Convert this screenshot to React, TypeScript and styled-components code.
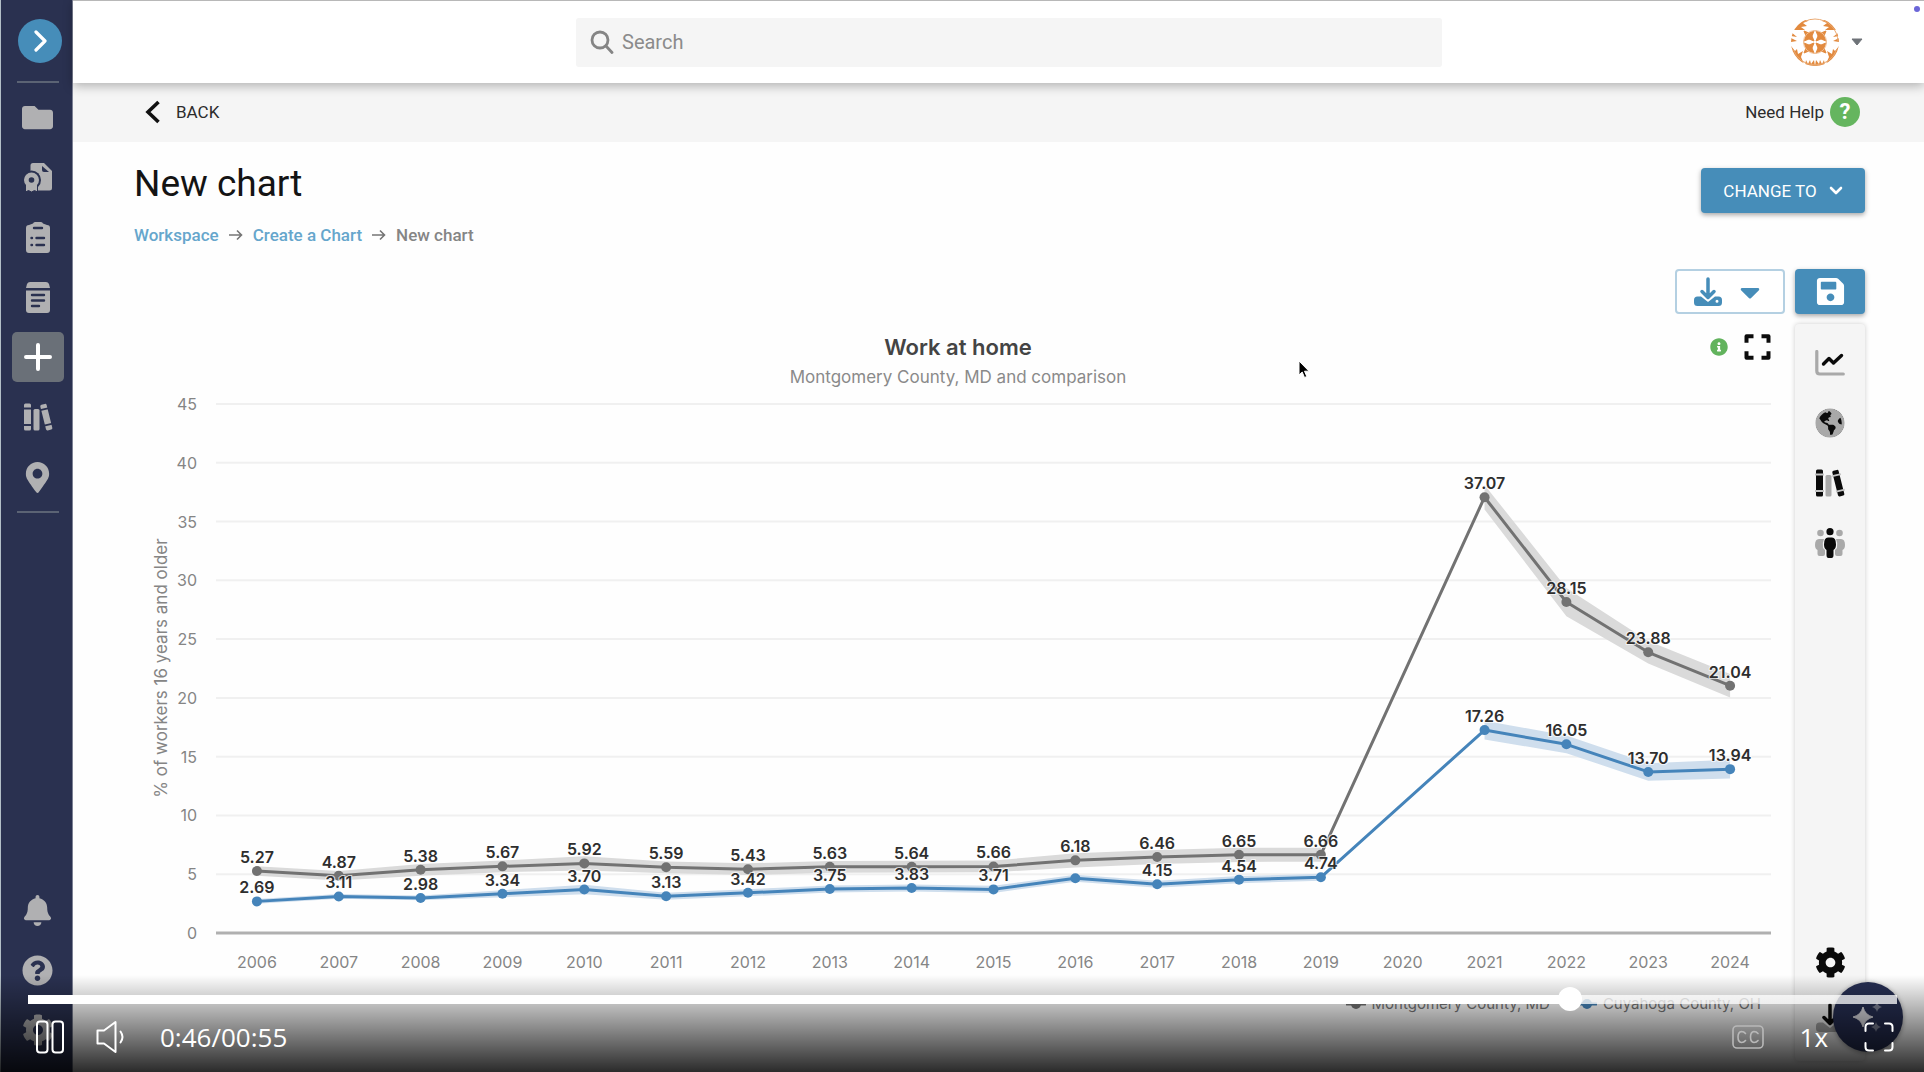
import React, { useState } from "react";
import styled, { createGlobalStyle } from "styled-components";
import {
  FaFolder,
  FaBell,
  FaCog,
  FaSave,
  FaGlobeAmericas,
  FaMapMarkerAlt,
  FaQuestionCircle,
  FaCaretDown,
  FaInfoCircle,
} from "react-icons/fa";

const GlobalStyle = createGlobalStyle`
  *, *::before, *::after { box-sizing: border-box; }
  body { margin: 0; background: #ffffff; font-family: Roboto, "Liberation Sans", sans-serif; }
  button { font: inherit; color: inherit; border: 0; padding: 0; background: none; cursor: pointer; }
  a { text-decoration: none; color: inherit; }
  svg { display: block; flex: none; }
`;

const NAVY = "#2a3150";
const BLUE = "#468db9";
const PALE = "#b0b0b2";

/* ---------- layout ---------- */

const Player = styled.div`
  position: relative;
  display: flex;
  min-height: 100vh;
  overflow: hidden;
  background: #fefefe;
`;

const Sidebar = styled.aside`
  width: 73px;
  flex: none;
  display: flex;
  flex-direction: column;
  align-items: center;
  padding: 19px 0 17px 2px;
  background: ${NAVY};
  color: ${PALE};
  border-left: 1px solid #b3bfc7;
  border-right: 1px solid #7d8295;
`;

const Toggle = styled.button`
  width: 44px;
  height: 44px;
  margin-left: 4px;
  border-radius: 50%;
  background: ${BLUE};
  display: grid;
  place-items: center;
`;

const Divider = styled.hr<{ $above: number }>`
  width: 42px;
  height: 2px;
  border: 0;
  margin: ${(p) => p.$above}px 0 9px;
  background: #5b6374;
`;

const NavList = styled.nav`
  display: flex;
  flex-direction: column;
  gap: 10px;
`;

const NavFooter = styled(NavList)`
  margin-top: auto;
`;

const NavItem = styled.a<{ $active?: boolean }>`
  width: 52px;
  height: 50px;
  border-radius: 5px;
  display: grid;
  place-items: center;
  background: ${(p) => (p.$active ? "#6a7078" : "transparent")};
`;

const Main = styled.main`
  flex: 1;
  min-width: 0;
  display: flex;
  flex-direction: column;
`;

const Header = styled.header`
  position: relative;
  height: 83px;
  display: grid;
  grid-template-columns: 503px minmax(200px, 1fr) 482px;
  align-items: center;
  background: #ffffff;
  border-top: 1px solid #b8b8b8;
  box-shadow: 0 3px 10px rgba(0, 0, 0, 0.28);
`;

const SearchBox = styled.label`
  height: 49px;
  display: flex;
  align-items: center;
  gap: 6px;
  padding-left: 14px;
  background: #f5f5f5;
  border-radius: 3px;
`;

const SearchInput = styled.input`
  flex: 1;
  border: 0;
  outline: 0;
  background: transparent;
  font: 20px Roboto, "Liberation Sans", sans-serif;
  color: #333333;
  &::placeholder {
    color: #8b8b8b;
    opacity: 1;
  }
`;

const AccountButton = styled.button`
  justify-self: end;
  margin-right: 61px;
  display: flex;
  align-items: center;
  gap: 12px;
  color: #6e7378;
`;

const RecordingDot = styled.span`
  position: absolute;
  top: 5px;
  right: 4px;
  width: 6px;
  height: 6px;
  border-radius: 50%;
  background: #6b66d8;
`;

const SubBar = styled.div`
  height: 59px;
  display: flex;
  align-items: center;
  justify-content: space-between;
  padding: 0 64px 2px 72px;
  background: #f5f5f5;
  font-size: 17px;
  color: #2c2c2c;
`;

const BackLink = styled.a`
  display: flex;
  align-items: center;
  gap: 16px;
`;

const HelpLink = styled.a`
  display: flex;
  align-items: center;
  gap: 6px;
`;

const HelpBadge = styled.span`
  width: 30px;
  height: 30px;
  border-radius: 50%;
  background: #65b55f;
  color: #ffffff;
  display: grid;
  place-items: center;
  font-size: 22px;
  font-weight: 700;
`;

const Content = styled.section`
  flex: 1;
  display: flex;
  flex-direction: column;
  gap: 10px;
  padding: 21px 59px 11px 61px;
`;

const Heading = styled.div`
  display: flex;
  justify-content: space-between;
  align-items: flex-start;
`;

const Title = styled.h1`
  margin: 0 0 20px;
  font-size: 37px;
  line-height: 42px;
  font-weight: 400;
  color: #141414;
`;

const Crumbs = styled.nav`
  display: flex;
  align-items: center;
  gap: 10px;
  font-size: 17px;
  line-height: 20px;
  font-weight: 500;
  color: #858585;
  a {
    color: #66a6cc;
  }
`;

const Actions = styled.div`
  padding-top: 5px;
  display: flex;
  flex-direction: column;
  align-items: flex-end;
  gap: 56px;
`;

const ToolRow = styled.div`
  display: flex;
  gap: 10px;
`;

const ActionButton = styled.button<{ $width: number; $outlined?: boolean }>`
  width: ${(p) => p.$width}px;
  height: 45px;
  display: flex;
  align-items: center;
  justify-content: center;
  gap: 12px;
  border-radius: 4px;
  font-size: 17px;
  background: ${(p) => (p.$outlined ? "#ffffff" : BLUE)};
  color: ${(p) => (p.$outlined ? BLUE : "#ffffff")};
  border: ${(p) => (p.$outlined ? "2px solid #b4d0e2" : "0")};
  box-shadow: ${(p) => (p.$outlined ? "none" : "0 2px 5px rgba(0, 0, 0, 0.35)")};
`;

const Workspace = styled.div`
  flex: 1;
  display: flex;
  gap: 10px;
`;

const ToolPanel = styled.aside`
  width: 70px;
  flex: none;
  display: flex;
  flex-direction: column;
  padding: 9px 0 15px;
  background: #f5f5f5;
  border-radius: 4px;
  box-shadow: 0 0 5px rgba(0, 0, 0, 0.2);
  color: #0a0a0a;
`;

const PanelButton = styled.button<{ $height: number; $pushDown?: boolean }>`
  height: ${(p) => p.$height}px;
  margin-top: ${(p) => (p.$pushDown ? "auto" : "0")};
  display: grid;
  place-items: center;
`;

const ChartFigure = styled.figure`
  flex: 1;
  min-width: 0;
  margin: 0;
  display: flex;
  flex-direction: column;
  font-family: Inter, "Liberation Sans", sans-serif;
`;

const ChartHeader = styled.figcaption`
  display: grid;
  grid-template-columns: 1fr auto 1fr;
  align-items: center;
  padding: 9px 14px 0 11px;
`;

const ChartTitle = styled.h2`
  grid-column: 2;
  margin: 0;
  font-size: 22px;
  line-height: 28px;
  font-weight: 600;
  text-align: center;
  color: #444444;
`;

const ChartSubtitle = styled.p`
  grid-column: 2;
  margin: 0;
  padding-top: 4px;
  font-size: 17px;
  line-height: 24px;
  text-align: center;
  color: #8a8a8a;
`;

const ChartTools = styled.div`
  justify-self: end;
  display: flex;
  align-items: center;
  gap: 16px;
  color: #62b35d;
`;

const Plot = styled.svg`
  width: 100%;
  height: auto;
  margin-top: -3px;
  font-family: Inter, "Liberation Sans", sans-serif;
`;

const AxisText = styled.text<{ $large?: boolean }>`
  font-size: ${(p) => (p.$large ? 17 : 16)}px;
  fill: #858585;
`;

const ValueText = styled.text`
  font-size: 16px;
  font-weight: 600;
  fill: #2e2e2e;
  stroke: #ffffff;
  stroke-width: 2px;
  stroke-opacity: 0.7;
  paint-order: stroke;
  text-anchor: middle;
`;

const Legend = styled.ul`
  list-style: none;
  margin: 8px 24px 0 0;
  padding: 0;
  display: flex;
  justify-content: flex-end;
  gap: 27px;
  font-size: 15px;
  line-height: 20px;
  color: #777777;
`;

const LegendItem = styled.li`
  display: flex;
  align-items: center;
  gap: 6px;
`;

const AssistantButton = styled.button`
  position: absolute;
  right: 21px;
  bottom: 20px;
  width: 70px;
  height: 70px;
  border-radius: 50%;
  background: #262e52;
  display: grid;
  place-items: center;
  box-shadow: 0 1px 5px rgba(0, 0, 0, 0.4);
`;

const Pointer = styled.svg`
  position: absolute;
  left: 1298px;
  top: 360px;
`;

/* ---------- video controls ---------- */

const Controls = styled.div`
  position: absolute;
  left: 0;
  right: 0;
  bottom: 0;
  height: 97px;
  padding: 12px 27px 0 28px;
  background: linear-gradient(rgba(0, 0, 0, 0), rgba(0, 0, 0, 0.83));
  color: #ffffff;
`;

const Progress = styled.input<{ $played: number }>`
  appearance: none;
  display: block;
  width: 100%;
  height: 24px;
  margin: 0;
  background: transparent;
  &::-webkit-slider-runnable-track {
    height: 9px;
    background: linear-gradient(
      to right,
      #ffffff ${(p) => p.$played}%,
      rgba(255, 255, 255, 0.75) ${(p) => p.$played}%
    );
  }
  &::-webkit-slider-thumb {
    appearance: none;
    width: 24px;
    height: 24px;
    margin-top: -8px;
    border-radius: 50%;
    background: #ffffff;
  }
`;

const ControlRow = styled.div`
  height: 52px;
  display: flex;
  align-items: center;
  gap: 32px;
  padding: 0 3px 0 8px;
  font-family: "Open Sans", "Noto Sans", sans-serif;
  font-size: 26px;
`;

const ControlGroup = styled.div`
  margin-left: auto;
  display: flex;
  align-items: center;
  gap: 36px;
`;

/* ---------- icons ---------- */

const CertificateIcon = () => (
  <svg width="30" height="30" viewBox="0 0 30 30">
    <path d="M10 1h11l8 8v17a2.500 2.500 0 0 1-2.500 2.500H10a2.500 2.500 0 0 1-2.500-2.500V3.500A2.500 2.500 0 0 1 10 1z" fill={PALE} />
    <path d="M19 4l7 6h-5a2 2 0 0 1-2-2z" fill={NAVY} />
    <circle cx="8.500" cy="18" r="9.500" fill={NAVY} />
    <path d="M2.500 22h12v8l-3-1.500-3 1.500-3-1.500-3 1.500z" fill={PALE} stroke={NAVY} strokeWidth="1" />
    <circle cx="8.500" cy="18" r="7.500" fill={PALE} />
    <circle cx="8.500" cy="18" r="2.800" fill={NAVY} />
  </svg>
);

const ClipboardIcon = () => (
  <svg width="24" height="31" viewBox="0 0 24 31">
    <path d="M7 1.500Q7.500 0 9 0h6q1.500 0 2 1.500l4 1.500a3 3 0 0 1 3 3v22a3 3 0 0 1-3 3H3a3 3 0 0 1-3-3V6a3 3 0 0 1 3-3z" fill={PALE} />
    <g stroke={NAVY} strokeWidth="2.400" strokeLinecap="round">
      <path d="M8 6h8M10.500 16h7.500M10.500 23h7.500M5.500 16h.5M5.500 23h.5" />
    </g>
  </svg>
);

const NoteIcon = () => (
  <svg width="24" height="31" viewBox="0 0 24 31">
    <path d="M4 0h16q2 0 3 2l1 4H0l1-4q1-2 3-2z" fill={PALE} />
    <path d="M0 8.500h24V28a3 3 0 0 1-3 3H3a3 3 0 0 1-3-3z" fill={PALE} />
    <path d="M6 13h12M6 18.500h12M6 24h7" stroke={NAVY} strokeWidth="2.400" strokeLinecap="round" />
  </svg>
);

const BooksIcon = ({ tone, middle, gap }: { tone: string; middle: string; gap: string }) => (
  <svg width="30" height="28" viewBox="0 0 30 28">
    <rect x="1" y="0.500" width="7" height="27" rx="1.500" fill={tone} />
    <path d="M0 5.500h9M0 22h9" stroke={gap} strokeWidth="1.800" />
    <rect x="10.500" y="6" width="6" height="21.500" rx="1.500" fill={middle} />
    <g transform="rotate(-14 23 14)">
      <rect x="20" y="1" width="6.500" height="26.500" rx="1.500" fill={tone} />
      <path d="M19 6h9M19 22h9" stroke={gap} strokeWidth="1.800" />
    </g>
  </svg>
);

const DownloadIcon = ({ arrow, tray }: { arrow: string; tray: string }) => (
  <svg width="28" height="30" viewBox="0 0 28 30">
    <path d="M3.500 19.500H7l7 5.500 7-5.500h3.500A3.500 3.500 0 0 1 28 23v2.500A3.500 3.500 0 0 1 24.500 29h-21A3.500 3.500 0 0 1 0 25.500V23a3.500 3.500 0 0 1 3.500-3.500zM23 22.800a1.500 1.500 0 1 0 0 3 1.500 1.500 0 0 0 0-3z" fill={tray} fillRule="evenodd" />
    <path d="M14 2v18M8 14.500l6 6 6-6" fill="none" stroke={arrow} strokeWidth="3.500" strokeLinecap="round" strokeLinejoin="round" />
  </svg>
);

const ChartLineIcon = () => (
  <svg width="30" height="26" viewBox="0 0 30 26">
    <path d="M1.800 1.500V21q0 3 3 3h23.500" fill="none" stroke="#a9a9a9" strokeWidth="3.200" strokeLinecap="round" />
    <path d="M8.500 14l5.500-5.500 4.500 4.500 8-7.500" fill="none" stroke="#0a0a0a" strokeWidth="3.400" strokeLinecap="round" strokeLinejoin="round" />
  </svg>
);

const GlobeStack = styled.span`
  display: grid;
  place-items: center;
  width: 30px;
  height: 30px;
  border-radius: 50%;
  background: radial-gradient(circle, #0a0a0a 66%, transparent 68%);
  color: #a9a9a9;
`;

const PeopleIcon = () => (
  <svg width="30" height="30" viewBox="0 0 30 30">
    <g fill="#a9a9a9">
      <circle cx="5.500" cy="5" r="3.300" />
      <circle cx="24.500" cy="5" r="3.300" />
      <path d="M4 11h5q-2 4-1 9l2 2v4q0 2-2 2H4.500q-2 0-2-2v-4Q0 21 0 17q0-6 4-6zM26 11h-5q2 4 1 9l-2 2v4q0 2 2 2h3.500q2 0 2-2v-4q2.500-1 2.500-5 0-6-4-6z" />
    </g>
    <g fill="#0a0a0a">
      <circle cx="15" cy="3.700" r="3.600" />
      <path d="M13 9.500h4q4 0 4 7 0 4-2.500 5.500V27q0 3-2 3h-3q-2 0-2-3v-5Q9 20.500 9 16.500q0-7 4-7z" />
    </g>
  </svg>
);

const ExpandIcon = () => (
  <svg width="27" height="26" viewBox="0 0 27 26" fill="none" stroke="#0c0c0c" strokeWidth="4" strokeLinejoin="round">
    <path d="M9.500 2.300h-7v6.500M17.500 2.300h7v6.500M9.500 23.700h-7v-6.500M17.500 23.700h7v-6.500" />
  </svg>
);

const Avatar = () => (
  <svg width="48" height="48" viewBox="-24 -24 48 48">
    <defs>
      <clipPath id="avatar-clip">
        <circle r="24" />
      </clipPath>
    </defs>
    <g clipPath="url(#avatar-clip)" fill="#e28a3f">
      {[1, -1].map((s) => (
        <g key={s} transform={`scale(${s} 1)`}>
          <path d="M1 -11L6 -9L11 -11L9 -6L11 -1L6 -3L1 -1L3 -6zM1 11L6 9L11 11L9 6L11 1L6 3L1 1L3 6z" stroke="#e28a3f" strokeWidth="1" />
          <path d="M7 -21L15 -24L24 -12L10 -12L14 -15L8 -16L12 -19z" />
          <path d="M24 -10L18 -5L24 -6zM24 -4L18 -1L24 0z" />
          <path d="M24 4L20 9L18 7L17 12L12 9L14 15L11 22L24 20z" />
          <path d="M10 24L9 18L7 22L5 18L4 22L1 18L0 24z" />
        </g>
      ))}
      <circle r="23" fill="none" stroke="#e9a76e" strokeWidth="1" strokeDasharray="56 33" strokeDashoffset="-8" />
      <circle r="11.500" fill="none" stroke="#efbd92" strokeWidth="1" />
    </g>
  </svg>
);

const SparklesIcon = () => (
  <svg width="34" height="34" viewBox="0 0 34 34">
    <path d="M12 7q2 8 10 10-8 2-10 10-2-8-10-10 8-2 10-10z" fill="#dcdce2" stroke="#dcdce2" strokeLinejoin="round" />
    <path d="M26 2q1 4 5 5-4 1-5 5-1-4-5-5 4-1 5-5zM25 22q1 4 5 5-4 1-5 5-1-4-5-5 4-1 5-5z" fill="#7d8296" />
  </svg>
);

const Arrow = () => (
  <svg width="14" height="12" viewBox="0 0 14 12" fill="none" stroke="#757575" strokeWidth="1.600">
    <path d="M0 6h12.500M8 1.500l4.500 4.500L8 10.500" />
  </svg>
);

/* ---------- chart ---------- */

type Point = { year: number; value: number | null; spread: number; label?: string };

const toPoints = (values: (number | null)[], spreads: number[], unlabeled: number[] = []): Point[] =>
  values.map((value, i) => ({
    year: 2006 + i,
    value,
    spread: spreads[i],
    label: value === null || unlabeled.includes(2006 + i) ? undefined : value.toFixed(2),
  }));

const series = [
  {
    name: "Montgomery County, MD",
    color: "#727272",
    band: "#dadada",
    points: toPoints(
      [5.27, 4.87, 5.38, 5.67, 5.92, 5.59, 5.43, 5.63, 5.64, 5.66, 6.18, 6.46, 6.65, 6.66, null, 37.07, 28.15, 23.88, 21.04],
      [0.4, 0.4, 0.5, 0.5, 0.6, 0.5, 0.5, 0.5, 0.5, 0.5, 0.6, 0.6, 0.6, 0.6, 0, 1.05, 1.2, 0.95, 1]
    ),
  },
  {
    name: "Cuyahoga County, OH",
    color: "#4584ba",
    band: "#cfdeed",
    points: toPoints(
      [2.69, 3.11, 2.98, 3.34, 3.7, 3.13, 3.42, 3.75, 3.83, 3.71, 4.66, 4.15, 4.54, 4.74, null, 17.26, 16.05, 13.7, 13.94],
      [0.2, 0.2, 0.2, 0.3, 0.4, 0.3, 0.3, 0.3, 0.3, 0.3, 0.3, 0.3, 0.3, 0.3, 0, 0.8, 0.75, 0.75, 0.8],
      [2016]
    ),
  },
];

const LEFT = 82;
const RIGHT = 1637;
const TOP = 18;
const BASE = 547;
const STEP = (RIGHT - LEFT) / 19;
const xOf = (year: number) => LEFT + (year - 2006 + 0.5) * STEP;
const yOf = (value: number) => BASE - (value * (BASE - TOP)) / 45;

const bandPath = (points: Point[]) => {
  const upper = points.map((p) => `${xOf(p.year)},${yOf(p.value! + p.spread)}`);
  const lower = [...points].reverse().map((p) => `${xOf(p.year)},${yOf(p.value! - p.spread)}`);
  return `M${[...upper, ...lower].join("L")}Z`;
};

const Chart = () => (
  <Plot viewBox="0 0 1651 600" role="img" aria-label="Work at home, percent by year">
    {[0, 5, 10, 15, 20, 25, 30, 35, 40, 45].map((tick) => (
      <g key={tick}>
        <line
          x1={LEFT}
          x2={RIGHT}
          y1={yOf(tick)}
          y2={yOf(tick)}
          stroke={tick ? "#f0f0f0" : "#b0b0b0"}
          strokeWidth={tick ? 2 : 3}
        />
        <AxisText x={LEFT - 19} y={yOf(tick) + 6} textAnchor="end">
          {tick}
        </AxisText>
      </g>
    ))}
    {series[0].points.map((p) => (
      <AxisText key={p.year} x={xOf(p.year)} y={BASE + 35} textAnchor="middle">
        {p.year}
      </AxisText>
    ))}
    <AxisText $large transform="translate(33 282) rotate(-90)" textAnchor="middle">
      % of workers 16 years and older
    </AxisText>
    {series.map((s) => (
      <g key={s.name} fill={s.band}>
        <path d={bandPath(s.points.slice(0, 14))} />
        <path d={bandPath(s.points.slice(15))} />
      </g>
    ))}
    {series.map((s) => {
      const drawn = s.points.filter((p) => p.value !== null);
      return (
        <g key={s.name}>
          <polyline
            points={drawn.map((p) => `${xOf(p.year)},${yOf(p.value!)}`).join(" ")}
            fill="none"
            stroke={s.color}
            strokeWidth="3"
            strokeLinejoin="round"
          />
          {drawn.map((p) => (
            <circle key={p.year} cx={xOf(p.year)} cy={yOf(p.value!)} r="5" fill={s.color} />
          ))}
        </g>
      );
    })}
    {series.map((s) =>
      s.points
        .filter((p) => p.label)
        .map((p) => (
          <ValueText key={s.name + p.year} x={xOf(p.year)} y={yOf(p.value!) - 8}>
            {p.label}
          </ValueText>
        ))
    )}
  </Plot>
);

/* ---------- page ---------- */

export default function App() {
  const [time, setTime] = useState(45.6);

  return (
    <Player>
      <GlobalStyle />
      <Sidebar>
        <Toggle aria-label="Expand menu">
          <svg width="14" height="22" viewBox="0 0 14 22" fill="none" stroke="#ffffff" strokeWidth="3.200" strokeLinecap="round" strokeLinejoin="round">
            <path d="M3 2l9 9-9 9" />
          </svg>
        </Toggle>
        <Divider $above={18} />
        <NavList aria-label="Main">
          <NavItem href="#files" aria-label="Files"><FaFolder size={31} /></NavItem>
          <NavItem href="#certificates" aria-label="Certificates"><CertificateIcon /></NavItem>
          <NavItem href="#surveys" aria-label="Surveys"><ClipboardIcon /></NavItem>
          <NavItem href="#notes" aria-label="Notes"><NoteIcon /></NavItem>
          <NavItem href="#create" aria-label="Create" $active>
            <svg width="28" height="28" viewBox="0 0 28 28" stroke="#ffffff" strokeWidth="4" strokeLinecap="round">
              <path d="M14 2v24M2 14h24" />
            </svg>
          </NavItem>
          <NavItem href="#library" aria-label="Library">
            <BooksIcon tone={PALE} middle={PALE} gap={NAVY} />
          </NavItem>
          <NavItem href="#places" aria-label="Places"><FaMapMarkerAlt size={31} /></NavItem>
        </NavList>
        <Divider $above={9} />
        <NavFooter aria-label="Support">
          <NavItem href="#alerts" aria-label="Alerts"><FaBell size={31} /></NavItem>
          <NavItem href="#help" aria-label="Help"><FaQuestionCircle size={31} /></NavItem>
          <NavItem href="#settings" aria-label="Settings"><FaCog size={32} /></NavItem>
        </NavFooter>
      </Sidebar>

      <Main>
        <Header>
          <span />
          <SearchBox>
            <svg width="24" height="24" viewBox="0 0 24 24" fill="none" stroke="#858585" strokeWidth="2.800" strokeLinecap="round">
              <circle cx="10" cy="10" r="8" />
              <path d="M16 16l6 6.500" />
            </svg>
            <SearchInput placeholder="Search" aria-label="Search" />
          </SearchBox>
          <AccountButton aria-label="Account">
            <Avatar />
            <svg width="12" height="8" viewBox="0 0 12 8" fill="currentColor"><path d="M1 1h10L6 7z" stroke="currentColor" strokeLinejoin="round" /></svg>
          </AccountButton>
          <RecordingDot />
        </Header>

        <SubBar>
          <BackLink href="#back">
            <svg width="15" height="24" viewBox="0 0 15 24" fill="none" stroke="#111111" strokeWidth="3.600">
              <path d="M13.500 2L3 12l10.500 10" />
            </svg>
            BACK
          </BackLink>
          <HelpLink href="#need-help">
            Need Help
            <HelpBadge>?</HelpBadge>
          </HelpLink>
        </SubBar>

        <Content>
          <Heading>
            <div>
              <Title>New chart</Title>
              <Crumbs aria-label="Breadcrumb">
                <a href="#workspace">Workspace</a>
                <Arrow />
                <a href="#create-chart">Create a Chart</a>
                <Arrow />
                <span>New chart</span>
              </Crumbs>
            </div>
            <Actions>
              <ActionButton $width={164}>
                CHANGE TO
                <svg width="14" height="9" viewBox="0 0 14 9" fill="none" stroke="#ffffff" strokeWidth="2.600" strokeLinecap="round" strokeLinejoin="round">
                  <path d="M2 2l5 5 5-5" />
                </svg>
              </ActionButton>
              <ToolRow>
                <ActionButton $width={110} $outlined aria-label="Download">
                  <DownloadIcon arrow={BLUE} tray={BLUE} />
                  <FaCaretDown size={32} />
                </ActionButton>
                <ActionButton $width={70} aria-label="Save">
                  <FaSave size={31} />
                </ActionButton>
              </ToolRow>
            </Actions>
          </Heading>

          <Workspace>
            <ChartFigure>
              <ChartHeader>
                <ChartTitle>Work at home</ChartTitle>
                <ChartTools>
                  <FaInfoCircle size={18} />
                  <button aria-label="Full screen chart"><ExpandIcon /></button>
                </ChartTools>
                <ChartSubtitle>Montgomery County, MD and comparison</ChartSubtitle>
              </ChartHeader>
              <Chart />
              <Legend>
                {series.map((s) => (
                  <LegendItem key={s.name}>
                    <svg width="20" height="12" viewBox="0 0 20 12">
                      <path d="M1 6h18" stroke={s.color} strokeWidth="3" strokeLinecap="round" />
                      <circle cx="10" cy="6" r="5" fill={s.color} />
                    </svg>
                    {s.name}
                  </LegendItem>
                ))}
              </Legend>
            </ChartFigure>

            <ToolPanel>
              <PanelButton $height={60} aria-label="Indicators"><ChartLineIcon /></PanelButton>
              <PanelButton $height={60} aria-label="Locations">
                <GlobeStack><FaGlobeAmericas size={30} /></GlobeStack>
              </PanelButton>
              <PanelButton $height={60} aria-label="Sources">
                <BooksIcon tone="#0a0a0a" middle="#a9a9a9" gap="#c4c4c4" />
              </PanelButton>
              <PanelButton $height={60} aria-label="Populations"><PeopleIcon /></PanelButton>
              <PanelButton $height={56} $pushDown aria-label="Chart settings"><FaCog size={31} /></PanelButton>
              <PanelButton $height={56} aria-label="Export">
                <DownloadIcon arrow="#0a0a0a" tray="#a9a9a9" />
              </PanelButton>
            </ToolPanel>
          </Workspace>
        </Content>
      </Main>

      <AssistantButton aria-label="Assistant"><SparklesIcon /></AssistantButton>

      <Pointer width="14" height="20" viewBox="0 0 14 20" aria-hidden="true">
        <path d="M1 1v14l3.200-3 2.300 5.500 2.300-1-2.300-5.300H11z" fill="#000000" stroke="#ffffff" strokeWidth="1" />
      </Pointer>

      <Controls>
        <Progress
          type="range"
          aria-label="Seek"
          min={0}
          max={55}
          step={0.1}
          value={time}
          $played={(time / 55) * 100}
          onChange={(e) => setTime(Number(e.target.value))}
        />
        <ControlRow>
          <button aria-label="Pause">
            <svg width="28" height="34" viewBox="0 0 28 34" fill="none" stroke="#ffffff" strokeWidth="2">
              <rect x="1" y="1.500" width="10.500" height="31" rx="3" />
              <rect x="16.500" y="1.500" width="10.500" height="31" rx="3" />
            </svg>
          </button>
          <button aria-label="Mute">
            <svg width="32" height="34" viewBox="0 0 32 34" fill="none" stroke="#ffffff" strokeWidth="2" strokeLinejoin="round" strokeLinecap="round">
              <path d="M1.500 10.500H8L19.500 2v30L8 23.500H1.500z" />
              <path d="M24.500 11.500q4 5.500 0 11" />
            </svg>
          </button>
          <span>0:46/00:55</span>
          <ControlGroup>
            <button aria-label="Captions">
              <svg width="32" height="24" viewBox="0 0 32 24" fill="none" stroke="#b8b8b8" strokeWidth="1.600" strokeLinecap="round">
                <rect x="1" y="1" width="30" height="22" rx="4" />
                <path d="M13.500 8.500q-1.500-2-4-2-3.500.5-3.500 5.500t3.500 5.500q2.500 0 4-2M26 8.500q-1.500-2-4-2-3.500.5-3.500 5.500t3.500 5.500q2.500 0 4-2" />
              </svg>
            </button>
            <button aria-label="Playback speed">1x</button>
            <button aria-label="Full screen">
              <svg width="30" height="30" viewBox="0 0 30 30" fill="none" stroke="#ffffff" strokeWidth="2" strokeLinecap="round">
                <path d="M9 1.500H5Q1.500 1.500 1.500 5v4M21 1.500h4q3.500 0 3.500 3.500v4M9 28.500H5q-3.500 0-3.500-3.500v-4M21 28.500h4q3.500 0 3.500-3.500v-4" />
              </svg>
            </button>
          </ControlGroup>
        </ControlRow>
      </Controls>
    </Player>
  );
}
